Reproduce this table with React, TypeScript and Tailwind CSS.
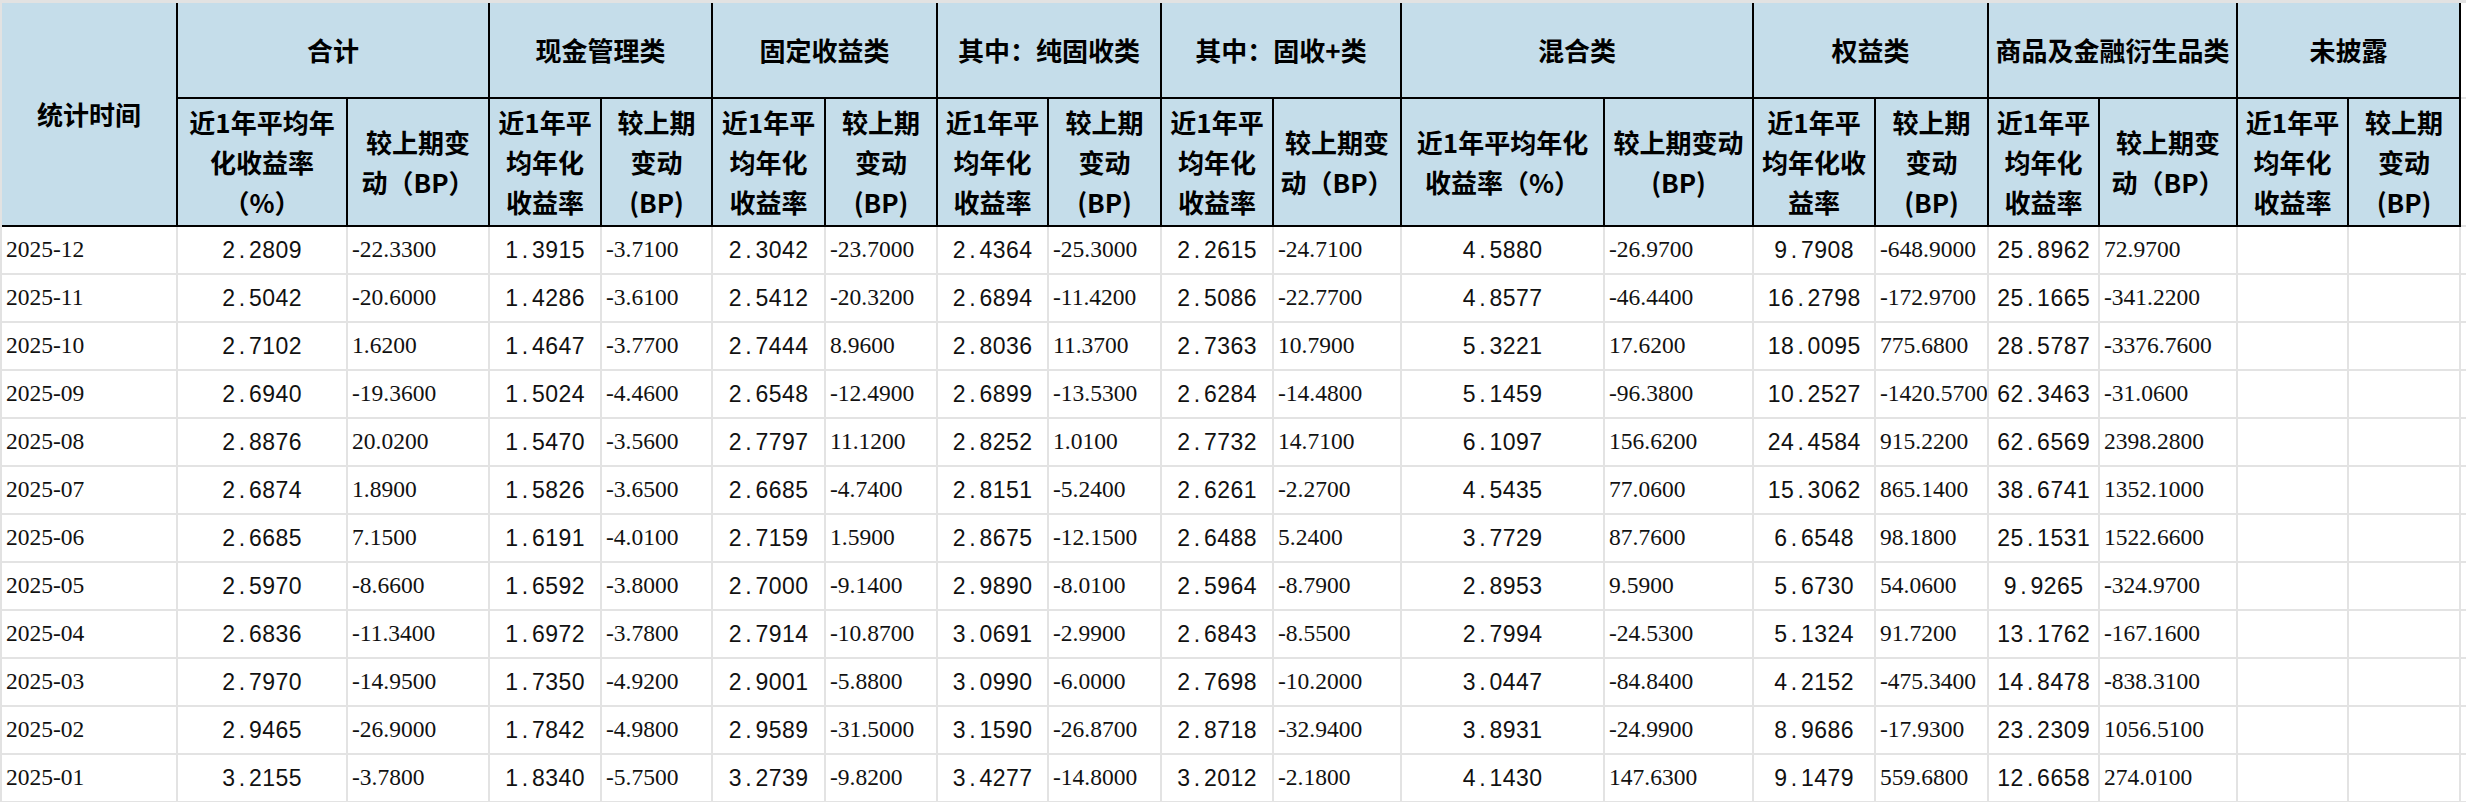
import React from "react";

const groups = [
  "合计",
  "现金管理类",
  "固定收益类",
  "其中：纯固收类",
  "其中：固收+类",
  "混合类",
  "权益类",
  "商品及金融衍生品类",
  "未披露",
];

const sub: string[][] = [
  ["近1年平均年", "化收益率", "（%）"],
  ["较上期变", "动（BP）"],
  ["近1年平", "均年化", "收益率"],
  ["较上期", "变动", "(BP)"],
  ["近1年平", "均年化", "收益率"],
  ["较上期", "变动", "(BP)"],
  ["近1年平", "均年化", "收益率"],
  ["较上期", "变动", "(BP)"],
  ["近1年平", "均年化", "收益率"],
  ["较上期变", "动（BP）"],
  ["近1年平均年化", "收益率（%）"],
  ["较上期变动", "(BP)"],
  ["近1年平", "均年化收", "益率"],
  ["较上期", "变动", "(BP)"],
  ["近1年平", "均年化", "收益率"],
  ["较上期变", "动（BP）"],
  ["近1年平", "均年化", "收益率"],
  ["较上期", "变动", "(BP)"],
];

const rows: string[][] = [
  ["2025-12", "2.2809", "-22.3300", "1.3915", "-3.7100", "2.3042", "-23.7000", "2.4364", "-25.3000", "2.2615", "-24.7100", "4.5880", "-26.9700", "9.7908", "-648.9000", "25.8962", "72.9700", "", ""],
  ["2025-11", "2.5042", "-20.6000", "1.4286", "-3.6100", "2.5412", "-20.3200", "2.6894", "-11.4200", "2.5086", "-22.7700", "4.8577", "-46.4400", "16.2798", "-172.9700", "25.1665", "-341.2200", "", ""],
  ["2025-10", "2.7102", "1.6200", "1.4647", "-3.7700", "2.7444", "8.9600", "2.8036", "11.3700", "2.7363", "10.7900", "5.3221", "17.6200", "18.0095", "775.6800", "28.5787", "-3376.7600", "", ""],
  ["2025-09", "2.6940", "-19.3600", "1.5024", "-4.4600", "2.6548", "-12.4900", "2.6899", "-13.5300", "2.6284", "-14.4800", "5.1459", "-96.3800", "10.2527", "-1420.5700", "62.3463", "-31.0600", "", ""],
  ["2025-08", "2.8876", "20.0200", "1.5470", "-3.5600", "2.7797", "11.1200", "2.8252", "1.0100", "2.7732", "14.7100", "6.1097", "156.6200", "24.4584", "915.2200", "62.6569", "2398.2800", "", ""],
  ["2025-07", "2.6874", "1.8900", "1.5826", "-3.6500", "2.6685", "-4.7400", "2.8151", "-5.2400", "2.6261", "-2.2700", "4.5435", "77.0600", "15.3062", "865.1400", "38.6741", "1352.1000", "", ""],
  ["2025-06", "2.6685", "7.1500", "1.6191", "-4.0100", "2.7159", "1.5900", "2.8675", "-12.1500", "2.6488", "5.2400", "3.7729", "87.7600", "6.6548", "98.1800", "25.1531", "1522.6600", "", ""],
  ["2025-05", "2.5970", "-8.6600", "1.6592", "-3.8000", "2.7000", "-9.1400", "2.9890", "-8.0100", "2.5964", "-8.7900", "2.8953", "9.5900", "5.6730", "54.0600", "9.9265", "-324.9700", "", ""],
  ["2025-04", "2.6836", "-11.3400", "1.6972", "-3.7800", "2.7914", "-10.8700", "3.0691", "-2.9900", "2.6843", "-8.5500", "2.7994", "-24.5300", "5.1324", "91.7200", "13.1762", "-167.1600", "", ""],
  ["2025-03", "2.7970", "-14.9500", "1.7350", "-4.9200", "2.9001", "-5.8800", "3.0990", "-6.0000", "2.7698", "-10.2000", "3.0447", "-84.8400", "4.2152", "-475.3400", "14.8478", "-838.3100", "", ""],
  ["2025-02", "2.9465", "-26.9000", "1.7842", "-4.9800", "2.9589", "-31.5000", "3.1590", "-26.8700", "2.8718", "-32.9400", "3.8931", "-24.9900", "8.9686", "-17.9300", "23.2309", "1056.5100", "", ""],
  ["2025-01", "3.2155", "-3.7800", "1.8340", "-5.7500", "3.2739", "-9.8200", "3.4277", "-14.8000", "3.2012", "-2.1800", "4.1430", "147.6300", "9.1479", "559.6800", "12.6658", "274.0100", "", ""],
];

const hdr =
  "bg-[#c5ddea] border-r-2 border-b-2 border-black flex flex-col items-center justify-center text-center font-['Noto_Sans_CJK_SC',sans-serif] font-bold text-[26px] leading-[40px] text-black whitespace-nowrap overflow-hidden";

const bodyBase =
  "bg-white border-r-2 border-b-2 border-[#e3e3e3] flex items-center whitespace-nowrap overflow-hidden text-[#111]";
const serif = "font-['Liberation_Serif',serif] text-[23.5px] pl-[4px] justify-start";
const mono = "font-['Liberation_Sans',sans-serif] text-[23px] justify-center";

function MonoNum({ v }: { v: string }) {
  return (
    <span className="flex">
      {v.split("").map((c, i) => (
        <span key={i} className="inline-block w-[13.3px] text-center">
          {c}
        </span>
      ))}
    </span>
  );
}

export default function App() {
  return (
    <div className="w-[2466px] h-[802px] overflow-hidden bg-white">
      <div className="border-t-[3px] border-l-2 border-[#e2e2e2] grid grid-cols-[176px_170px_142px_112px_111px_113px_112px_111px_113px_112px_128px_203px_149px_122px_113px_111px_138px_111px_112px_1fr] grid-rows-[96px_128px_repeat(12,48px)]">
        <div className={`${hdr} row-span-2`}>统计时间</div>
        {groups.map((g) => (
          <div key={g} className={`${hdr} col-span-2`}>
            {g}
          </div>
        ))}
        <div className="bg-white border-b-2 border-[#e3e3e3]" />
        {sub.map((lines, i) => (
          <div key={i} className={hdr}>
            {lines.map((l, j) => (
              <span key={j} className="block">
                {l}
              </span>
            ))}
          </div>
        ))}
        <div className="bg-white border-b-2 border-[#e3e3e3]" />
        {rows.map((r, ri) => (
          <React.Fragment key={ri}>
            {r.map((v, ci) => {
              const isMono = ci > 0 && ci % 2 === 1;
              return (
                <div key={ci} className={`${bodyBase} ${isMono ? mono : serif}`}>
                  {isMono ? <MonoNum v={v} /> : v}
                </div>
              );
            })}
            <div className="bg-white border-b-2 border-[#e3e3e3]" />
          </React.Fragment>
        ))}
      </div>
    </div>
  );
}
